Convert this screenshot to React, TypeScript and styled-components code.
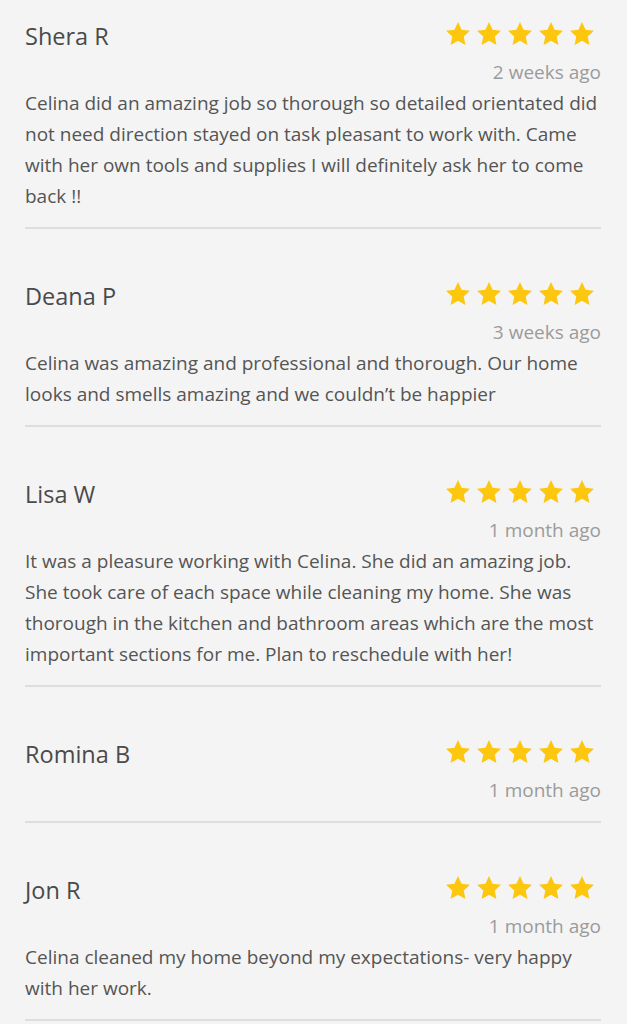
import React from "react";
import styled, { createGlobalStyle } from "styled-components";

const GlobalStyle = createGlobalStyle`
  html, body {
    margin: 0;
    padding: 0;
    background: #f4f4f4;
  }
  body {
    font-family: "Open Sans", "Lato", sans-serif;
  }
`;

const List = styled.div`
  padding: 0 26px 0 25px;
  display: flex;
  flex-direction: column;
  gap: 31px;
`;

const Review = styled.article`
  padding: 15px 0;
  border-bottom: 2px solid #dedede;
`;

const Header = styled.div`
  height: 42px;
  display: flex;
  align-items: center;
  justify-content: space-between;
`;

const Name = styled.h3`
  margin: 0;
  font-size: 23.5px;
  font-weight: 400;
  color: #4a4a4a;
  line-height: 30px;
`;

const Stars = styled.div`
  display: flex;
  gap: 7px;
  margin-right: 7px;
  margin-top: -4px;
`;

const Star = styled.svg`
  width: 24px;
  height: 24px;
  display: block;
  fill: #fdc60f;
`;

const DateText = styled.div`
  text-align: right;
  font-size: 19px;
  line-height: 31px;
  color: #9b9b9b;
`;

const Body = styled.p`
  margin: 0;
  font-size: 19px;
  line-height: 31px;
  color: #555555;
`;

type ReviewData = { name: string; date: string; text?: string };

const reviews: ReviewData[] = [
  {
    name: "Shera R",
    date: "2 weeks ago",
    text: "Celina did an amazing job so thorough so detailed orientated did not need direction stayed on task pleasant to work with. Came with her own tools and supplies I will definitely ask her to come back !!",
  },
  {
    name: "Deana P",
    date: "3 weeks ago",
    text: "Celina was amazing and professional and thorough. Our home looks and smells amazing and we couldn\u2019t be happier",
  },
  {
    name: "Lisa W",
    date: "1 month ago",
    text: "It was a pleasure working with Celina. She did an amazing job. She took care of each space while cleaning my home. She was thorough in the kitchen and bathroom areas which are the most important sections for me. Plan to reschedule with her!",
  },
  { name: "Romina B", date: "1 month ago" },
  {
    name: "Jon R",
    date: "1 month ago",
    text: "Celina cleaned my home beyond my expectations- very happy with her work.",
  },
];

const StarIcon = () => (
  <Star viewBox="0 0 24 24">
    <polygon points="12,0.1 15.56,7.81 23.98,8.81 17.75,14.57 19.41,22.89 12,18.75 4.59,22.89 6.25,14.57 0.02,8.81 8.44,7.81" />
  </Star>
);

export default function App() {
  return (
    <>
      <GlobalStyle />
      <List>
        {reviews.map((r) => (
          <Review key={r.name}>
            <Header>
              <Name>{r.name}</Name>
              <Stars>
                {[0, 1, 2, 3, 4].map((i) => (
                  <StarIcon key={i} />
                ))}
              </Stars>
            </Header>
            <DateText>{r.date}</DateText>
            {r.text && <Body>{r.text}</Body>}
          </Review>
        ))}
      </List>
    </>
  );
}
